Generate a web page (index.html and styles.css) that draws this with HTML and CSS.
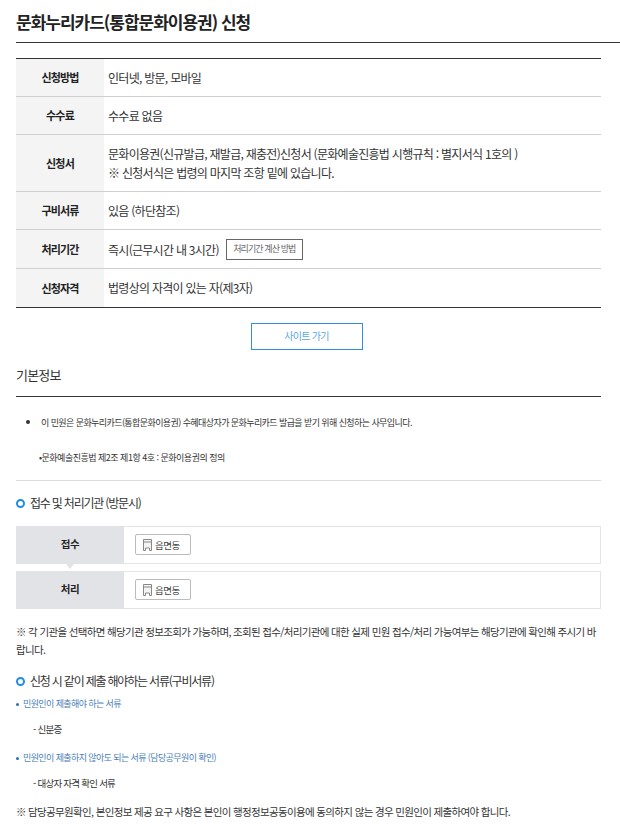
FILE: index.html
```html
<!DOCTYPE html>
<html lang="ko">
<head>
<meta charset="utf-8">
<title>문화누리카드(통합문화이용권) 신청</title>
<link rel="stylesheet" href="styles.css">
</head>
<body>
<h1 class="page-title">문화누리카드(통합문화이용권) 신청</h1>
<main class="content">
  <section class="summary">
    <div class="row"><div class="th">신청방법</div><div class="td">인터넷, 방문, 모바일</div></div>
    <div class="row"><div class="th">수수료</div><div class="td">수수료 없음</div></div>
    <div class="row"><div class="th">신청서</div><div class="td"><p>문화이용권(신규발급, 재발급, 재충전)신청서 (문화예술진흥법 시행규칙 : 별지서식 1호의 )</p><p>※ 신청서식은 법령의 마지막 조항 밑에 있습니다.</p></div></div>
    <div class="row"><div class="th">구비서류</div><div class="td">있음 (하단참조)</div></div>
    <div class="row tall"><div class="th">처리기간</div><div class="td inline">즉시(근무시간 내 3시간)<span class="calc">처리기간 계산 방법</span></div></div>
    <div class="row tall last"><div class="th">신청자격</div><div class="td">법령상의 자격이 있는 자(제3자)</div></div>
  </section>
  <div class="site-wrap"><a class="site">사이트 가기</a></div>
  <h2 class="basic">기본정보</h2>
  <ul class="desc"><li>이 민원은 문화누리카드(통합문화이용권) 수혜대상자가 문화누리카드 발급을 받기 위해 신청하는 사무입니다.</li></ul>
  <p class="law">•문화예술진흥법 제2조 제1항 4호 : 문화이용권의 정의</p>
  <h3 class="sub first">접수 및 처리기관 (방문시)</h3>
  <div class="org">
    <div class="org-row arrow"><div class="org-th">접수</div><div class="org-td"><span class="place"><svg class="bld" viewBox="0 0 9 12"><path d="M.5 11.5V.5h8v11h-2V9h-4v2.5z M.5 3h8" fill="#f4f4f4" stroke="#888" stroke-width="1"/></svg>읍면동</span></div></div>
    <div class="org-row"><div class="org-th">처리</div><div class="org-td"><span class="place"><svg class="bld" viewBox="0 0 9 12"><path d="M.5 11.5V.5h8v11h-2V9h-4v2.5z M.5 3h8" fill="#f4f4f4" stroke="#888" stroke-width="1"/></svg>읍면동</span></div></div>
  </div>
  <p class="note">※ 각 기관을 선택하면 해당기관 정보조회가 가능하며, 조회된 접수/처리기관에 대한 실제 민원 접수/처리 가능여부는 해당기관에 확인해 주시기 바랍니다.</p>
  <h3 class="sub second">신청 시 같이 제출 해야하는 서류(구비서류)</h3>
  <p class="blue">민원인이 제출해야 하는 서류</p>
  <p class="dash">- 신분증</p>
  <p class="blue b2">민원인이 제출하지 않아도 되는 서류 (담당공무원이 확인)</p>
  <p class="dash">- 대상자 자격 확인 서류</p>
  <p class="end">※ 담당공무원확인, 본인정보 제공 요구 사항은 본인이 행정정보공동이용에 동의하지 않는 경우 민원인이 제출하여야 합니다.</p>
</main>
</body>
</html>
```
FILE: styles.css
```css
* { box-sizing: border-box; }
html, body { margin: 0; padding: 0; }
body {
  font-family: "Noto Sans CJK KR", "Noto Sans", sans-serif;
  font-size: 12px;
  color: #333;
  background: #fff;
  overflow: hidden;
}
p, h1, h2, h3, ul { margin: 0; padding: 0; font-weight: 400; }
.page-title {
  margin-left: 16px;
  height: 43px;
  padding-top: 9px;
  font-size: 17px;
  line-height: 26px;
  font-weight: 700;
  color: #222;
  letter-spacing: -1px;
  border-bottom: 1px solid #333;
}
.content { padding: 15px 19px 0 16px; }
.summary { border-top: 1px solid #333; }
.row {
  display: grid;
  grid-template-columns: 88px 1fr;
  border-bottom: 1px solid #d0d0d0;
}
.row.last { border-bottom-color: #333; }
.th {
  background: #f4f4f4;
  display: flex;
  align-items: center;
  justify-content: center;
  font-weight: 700;
  font-size: 11px;
  letter-spacing: -0.85px;
  color: #222;
  padding-bottom: 1px;
}
.td { padding: 9px 4px; line-height: 19px; font-size: 12px; letter-spacing: -0.72px; }
.td p { line-height: 19px; }
.row.tall .td { padding: 9px 4px 10px; line-height: 19px; }
.td.inline { display: flex; align-items: center; }
.row.tall .td.inline { padding: 8px 4px 8px; height: 38px; }
.calc {
  margin-left: 7px;
  width: 77px;
  height: 21px;
  border: 1px solid #666;
  font-size: 9px;
  letter-spacing: -0.9px;
  line-height: 18px;
  text-align: center;
  color: #666;
}
.site-wrap { display: flex; justify-content: center; margin-top: 15px; padding-right: 4px; }
.site {
  width: 112px;
  height: 27px;
  border: 1px solid #2f8fe0;
  font-size: 10px;
  letter-spacing: -0.7px;
  line-height: 24px;
  text-align: center;
  color: #5aa7e6;
}
.basic {
  margin-top: 15px;
  height: 32px;
  font-size: 13px;
  line-height: 20px;
  letter-spacing: -0.8px;
  border-bottom: 1px solid #333;
}
.desc { list-style: disc; padding-left: 25px; margin-top: 15px; font-size: 9px; line-height: 20px; letter-spacing: -0.58px; }
.desc li::marker { font-size: 10px; }
.law {
  margin-top: 15px;
  padding-left: 23px;
  padding-bottom: 12px;
  font-size: 9px;
  line-height: 20px;
  letter-spacing: -0.5px;
  border-bottom: 1px solid #ddd;
}
.sub {
  font-size: 12px;
  line-height: 18px;
  letter-spacing: -1.2px;
  padding-left: 14px;
  position: relative;
  color: #333;
}
.sub::before {
  content: "";
  box-sizing: border-box;
  position: absolute;
  left: 0;
  top: 5px;
  width: 9px;
  height: 9px;
  border: 2px solid #1f8ce6;
  border-radius: 50%;
}
.sub.first { margin-top: 13px; }
.sub.second { margin-top: 13px; }
.org { margin-top: 14px; display: flex; flex-direction: column; gap: 7px; }
.org-row {
  display: grid;
  grid-template-columns: 108px 1fr;
  height: 38px;
  border: 1px solid #e4e4e4;
  border-left: 0;
  position: relative;
}
.org-th {
  background: #e2e3e7;
  display: flex;
  align-items: center;
  justify-content: center;
  font-weight: 700;
  font-size: 10.5px;
  letter-spacing: -0.5px;
  color: #222;
  margin: -1px 0;
  padding-bottom: 4px;
}
.arrow::after {
  content: "";
  position: absolute;
  left: 50px;
  top: 37px;
  border: 4px solid transparent;
  border-top: 5px solid #e2e3e7;
  border-bottom: 0;
}
.org-td { padding: 7px 11px; }
.place {
  display: flex;
  align-items: center;
  width: 56px;
  height: 21px;
  border: 1px solid #bbb;
  border-radius: 2px;
  padding-left: 7px;
  font-size: 9.5px;
  color: #444;
  letter-spacing: -0.5px;
}
.bld { width: 9px; height: 12px; margin-right: 3px; flex: none; }
.note { margin-top: 14px; font-size: 10.5px; line-height: 18px; letter-spacing: -0.66px; }
.blue {
  margin-top: 5px;
  padding-left: 7px;
  font-size: 9px;
  line-height: 18px;
  letter-spacing: -0.6px;
  color: #4b7fb8;
  position: relative;
}
.blue::before {
  content: "";
  position: absolute;
  left: 0;
  top: 8px;
  width: 3px;
  height: 3px;
  border-radius: 50%;
  background: #2a6fb5;
}
.blue.b2 { margin-top: 11px; }
.dash { margin-top: 7px; padding-left: 17px; font-size: 9.5px; line-height: 18px; letter-spacing: -0.75px; }
.end { margin-top: 11px; font-size: 10.5px; line-height: 18px; letter-spacing: -0.66px; }
```
